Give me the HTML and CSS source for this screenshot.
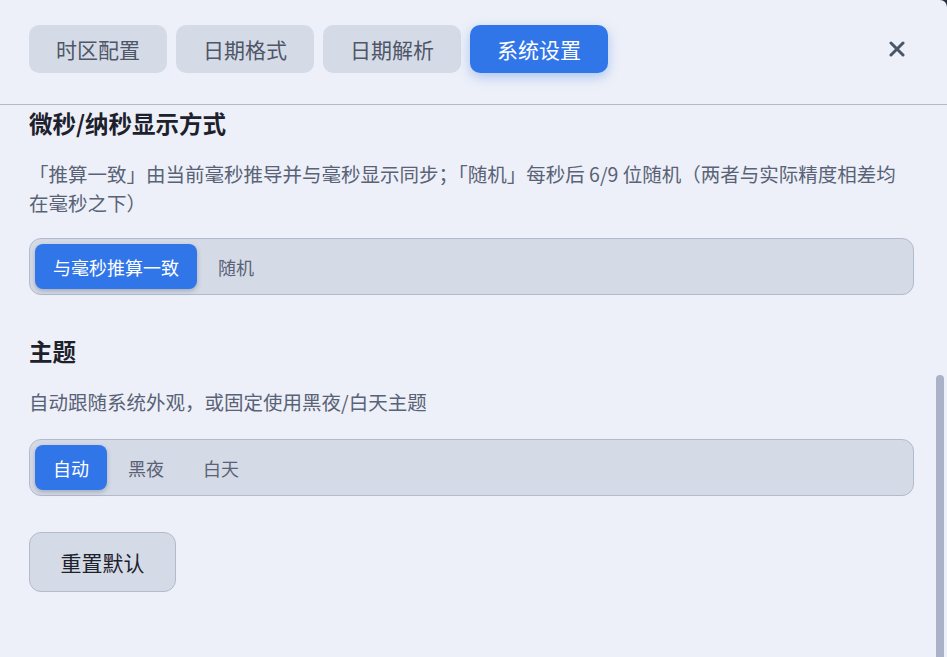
FILE: index.html
```html
<!DOCTYPE html>
<html lang="zh-CN">

<head>
  <meta charset="UTF-8">
  <meta name="viewport" content="width=device-width, initial-scale=1.0">
  <title>设置</title>
  <link rel="stylesheet" href="styles.css">
</head>

<body>
  <div class="panel">
    <div class="panel-head">
      <nav class="tabs">
        <button class="tab">时区配置</button>
        <button class="tab">日期格式</button>
        <button class="tab">日期解析</button>
        <button class="tab active">系统设置</button>
      </nav>
      <button class="close" aria-label="关闭">
        <svg width="16" height="16" viewBox="0 0 16 16">
          <path d="M2 2 L14 14 M14 2 L2 14" stroke="currentColor" stroke-width="3" stroke-linecap="round" />
        </svg>
      </button>
    </div>

    <div class="panel-body">
      <section class="setting">
        <h3>微秒/纳秒显示方式</h3>
        <p class="hint">「推算一致」由当前毫秒推导并与毫秒显示同步；「随机」每秒后 6/9 位随机（两者与实际精度相差均在毫秒之下）</p>
        <div class="segmented">
          <button class="seg active">与毫秒推算一致</button>
          <button class="seg">随机</button>
        </div>
      </section>

      <section class="setting">
        <h3>主题</h3>
        <p class="hint">自动跟随系统外观，或固定使用黑夜/白天主题</p>
        <div class="segmented">
          <button class="seg active">自动</button>
          <button class="seg">黑夜</button>
          <button class="seg">白天</button>
        </div>
      </section>

      <button class="reset">重置默认</button>

      <div class="scroll-thumb"></div>
    </div>
  </div>
</body>

</html>
```

FILE: styles.css
```css
* {
  padding: 0;
  margin: 0;
  border: 0;
  box-sizing: border-box;
  font-family: "Noto Sans CJK SC", "Noto Sans", sans-serif;
}

body {
  background: #2a2f3a;
  height: 100vh;
  overflow: hidden;
}

button {
  background: none;
  cursor: pointer;
}

.panel {
  height: 100vh;
  background: #edf0f8;
  border-top-right-radius: 7px;
  display: flex;
  flex-direction: column;
}

/* header with tabs */

.panel-head {
  display: flex;
  align-items: center;
  justify-content: space-between;
  padding: 25px 42px 31px 29px;
  border-bottom: 1px solid #b4b9c6;
}

.tabs {
  display: flex;
  gap: 9px;
}

.tab {
  height: 48px;
  width: 138px;
  border-radius: 10px;
  background: #d5dbe6;
  color: #4e5668;
  font-size: 21px;
}

.tab.active {
  background: #3176e9;
  color: #fff;
  box-shadow: 0 4px 12px rgba(49, 118, 233, 0.35);
}

.close {
  color: #4b5569;
  width: 16px;
  height: 16px;
  display: flex;
}

/* scrolling body */

.panel-body {
  flex: 1;
  position: relative;
  overflow: hidden;
  padding: 3px 33px 0 29px;
}

.setting h3 {
  font-size: 23.5px;
  line-height: 30px;
  font-weight: 700;
  color: #1d212c;
}

.hint {
  margin-top: 21px;
  font-size: 19.5px;
  line-height: 29px;
  color: #596276;
}

.segmented {
  display: flex;
  gap: 3px;
  margin-top: 21px;
  padding: 5px;
  border: 1px solid #b3bacb;
  border-radius: 12px;
  background: #d5dbe6;
}

.seg {
  height: 45px;
  padding: 0 18px;
  border-radius: 8px;
  font-size: 18px;
  color: #596276;
}

.seg.active {
  background: #3176e9;
  color: #fff;
  box-shadow: 0 2px 5px rgba(30, 40, 70, 0.28);
}

.setting + .setting {
  margin-top: 41px;
}

.setting + .setting .segmented {
  margin-top: 23px;
}

.reset {
  margin-top: 36px;
  width: 147px;
  height: 60px;
  border: 1px solid #b3bacb;
  border-radius: 12px;
  background: #d5dbe6;
  color: #1d212c;
  font-size: 21px;
}

.scroll-thumb {
  position: absolute;
  right: 3px;
  top: 270px;
  width: 8px;
  height: 300px;
  border-radius: 4px;
  background: #a9b2c6;
}
```
